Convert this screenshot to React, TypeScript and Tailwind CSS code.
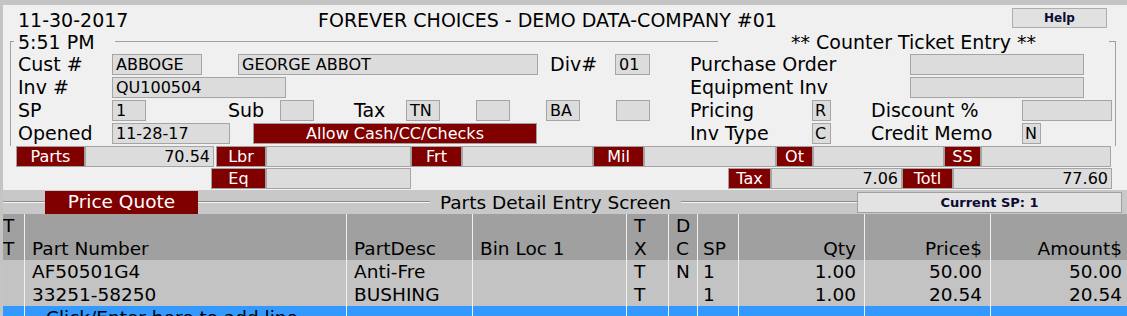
import type { ReactNode } from "react";

type P = { className?: string; children?: ReactNode };

function Label({ className = "", children }: P) {
  return <span className={`shrink-0 whitespace-nowrap text-[19px] leading-[23px] ${className}`}>{children}</span>;
}

function Field({ className = "", children }: P) {
  return (
    <div
      className={`flex h-[21px] shrink-0 items-center overflow-hidden whitespace-nowrap border border-[#a5a5a5] bg-[#dcdcdc] px-[3px] text-[16px] leading-none ${className}`}
    >
      {children}
    </div>
  );
}

function Red({ className = "", children }: P) {
  return (
    <div
      className={`flex h-[21px] shrink-0 items-center justify-center whitespace-nowrap border border-[#a0a0a0] bg-[#800000] text-[16px] leading-none text-white ${className}`}
    >
      {children}
    </div>
  );
}

function Etch({ className = "" }: { className?: string }) {
  return <div className={`h-[2px] border-t border-b border-t-[#8c8c8c] border-b-[#f4f4f4] ${className}`} />;
}

const cols = [
  "w-[21px]",
  "w-[322px] border-l border-[#f0f0f0] pl-[7px]",
  "w-[126px] border-l border-[#f0f0f0] pl-[7px]",
  "w-[154px] border-l border-[#f0f0f0] pl-[7px]",
  "w-[42px] border-l border-[#f0f0f0] pl-[7px]",
  "w-[29px] border-l border-[#f0f0f0] pl-[7px]",
  "w-[41px] border-l border-[#f0f0f0] pl-[5px]",
  "w-[126px] border-l border-[#f0f0f0] pr-[8px] text-right",
  "w-[126px] border-l border-[#f0f0f0] pr-[8px] text-right",
  "w-[140px] border-l border-[#f0f0f0] pr-[8px] text-right",
];

const head = [["T", "T"], ["Part Number"], ["PartDesc"], ["Bin Loc 1"], ["T", "X"], ["D", "C"], ["SP"], ["Qty"], ["Price$"], ["Amount$"]];

const lines = [
  ["", "AF50501G4", "Anti-Fre", "", "T", "N", "1", "1.00", "50.00", "50.00"],
  ["", "33251-58250", "BUSHING", "", "T", "", "1", "1.00", "20.54", "20.54"],
];

export default function App() {
  return (
    <div className="h-[316px] w-[1127px] overflow-hidden border-l-[3px] border-t-[5px] border-[#c4c4c4] bg-[#f0f0f0] font-['DejaVu_Sans',sans-serif] text-black">
      {/* title row */}
      <div className="flex h-[36px] items-start">
        <span className="mt-[4px] w-[315px] shrink-0 pl-[15px] text-[19px] leading-[22px]">11-30-2017</span>
        <span className="mt-[4px] whitespace-nowrap text-[19px] leading-[22px]">FOREVER CHOICES - DEMO DATA-COMPANY #01</span>
        <button className="ml-auto mr-[20px] mt-[3px] flex h-[20px] w-[95px] items-center justify-center border border-[#adadad] bg-[#e1e1e1] text-[12px] font-bold text-[#0a0a32]">
          Help
        </button>
      </div>

      {/* group box */}
      <div className="relative ml-[7px] w-[1106px] border-l border-r border-t border-[#a0a0a0] pb-[1px] pl-[7px] pt-[11px]">
        <span className="absolute left-[3px] top-[-11px] w-[101px] bg-[#f0f0f0] pl-[4px] text-[19px] leading-[22px]">5:51 PM</span>
        <span className="absolute left-[707px] top-[-11px] w-[391px] bg-[#f0f0f0] text-center text-[19px] leading-[22px]">
          ** Counter Ticket Entry **
        </span>

        <div className="flex h-[23px] items-center">
          <Label className="w-[94px]">Cust #</Label>
          <Field className="w-[90px]">ABBOGE</Field>
          <Field className="ml-[36px] w-[300px]">GEORGE ABBOT</Field>
          <Label className="ml-[12px] w-[65px]">Div#</Label>
          <Field className="w-[35px]">01</Field>
          <Label className="ml-[40px] w-[220px]">Purchase Order</Label>
          <Field className="w-[174px]" />
        </div>
        <div className="flex h-[23px] items-center">
          <Label className="w-[94px]">Inv #</Label>
          <Field className="w-[174px]">QU100504</Field>
          <Label className="ml-[404px] w-[220px]">Equipment Inv</Label>
          <Field className="w-[174px]" />
        </div>
        <div className="flex h-[23px] items-center">
          <Label className="w-[94px]">SP</Label>
          <Field className="w-[34px]">1</Field>
          <Label className="ml-[82px] w-[52px]">Sub</Label>
          <Field className="w-[34px]" />
          <Label className="ml-[40px] w-[52px]">Tax</Label>
          <Field className="w-[34px]">TN</Field>
          <Field className="ml-[36px] w-[34px]" />
          <Field className="ml-[36px] w-[34px]">BA</Field>
          <Field className="ml-[36px] w-[34px]" />
          <Label className="ml-[40px] w-[122px]">Pricing</Label>
          <Field className="w-[19px] !px-[2px]">R</Field>
          <Label className="ml-[40px] w-[151px]">Discount %</Label>
          <Field className="w-[90px]" />
        </div>
        <div className="flex h-[23px] items-center">
          <Label className="w-[94px]">Opened</Label>
          <Field className="w-[118px]">11-28-17</Field>
          <Red className="ml-[23px] w-[284px]">Allow Cash/CC/Checks</Red>
          <Label className="ml-[153px] w-[122px]">Inv Type</Label>
          <Field className="w-[19px] !px-[2px]">C</Field>
          <Label className="ml-[40px] w-[151px]">Credit Memo</Label>
          <Field className="w-[19px] !px-[2px]">N</Field>
        </div>
      </div>

      {/* totals */}
      <div className="ml-[13px] flex h-[21px] items-center">
        <Red className="w-[69px]">Parts</Red>
        <Field className="w-[129px] justify-end">70.54</Field>
        <Red className="ml-[2px] w-[50px]">Lbr</Red>
        <Field className="w-[145px]" />
        <Red className="w-[51px]">Frt</Red>
        <Field className="w-[131px]" />
        <Red className="w-[51px]">Mil</Red>
        <Field className="w-[132px]" />
        <Red className="w-[37px]">Ot</Red>
        <Field className="w-[131px]" />
        <Red className="w-[37px]">SS</Red>
        <Field className="w-[130px]" />
      </div>
      <div className="mt-[1px] flex h-[21px] items-center">
        <Red className="ml-[208px] w-[55px]">Eq</Red>
        <Field className="w-[145px]" />
        <Red className="ml-[317px] w-[43px]">Tax</Red>
        <Field className="w-[131px] justify-end">7.06</Field>
        <Red className="w-[51px]">Totl</Red>
        <Field className="w-[159px] justify-end">77.60</Field>
      </div>

      {/* section bar */}
      <div className="mt-[1px] flex h-[24px] items-center bg-[#c8c8c8]">
        <Etch className="w-[42px] shrink-0" />
        <div className="flex h-[23px] w-[153px] shrink-0 items-center justify-center self-end bg-[#800000] text-[18.5px] leading-none text-white">
          Price Quote
        </div>
        <Etch className="w-[232px] shrink-0" />
        <div className="h-[24px] w-[251px] shrink-0 pt-[2px] text-center text-[18.5px] leading-[22px]">Parts Detail Entry Screen</div>
        <Etch className="flex-1" />
        <div className="mb-[1px] flex h-[21px] w-[265px] shrink-0 items-center justify-center self-end border border-[#a0a0a0] bg-[#e3e3e3] text-[13px] font-bold text-[#0a0a32]">
          Current SP: 1
        </div>
        <div className="w-[5px] shrink-0" />
      </div>

      {/* grid */}
      <div className="text-[18.5px] leading-[23px]">
        <div className="flex h-[46px] bg-[#a0a0a0]">
          {head.map((h, i) => (
            <div key={i} className={`flex shrink-0 flex-col justify-end whitespace-nowrap ${cols[i]}`}>
              {h.map((t, j) => (
                <span key={j}>{t}</span>
              ))}
            </div>
          ))}
        </div>
        {lines.map((r, k) => (
          <div key={k} className="flex h-[23px] bg-[#c3c3c3]">
            {r.map((c, i) => (
              <div key={i} className={`shrink-0 whitespace-nowrap ${cols[i]}`}>
                {c}
              </div>
            ))}
          </div>
        ))}
        <div className="flex h-[23px] bg-[#3399ff]">
          {cols.map((c, i) => (
            <div key={i} className={`shrink-0 whitespace-nowrap ${c}`}>
              {i === 1 && <span className="ml-[14px]">Click/Enter here to add line</span>}
            </div>
          ))}
        </div>
      </div>
    </div>
  );
}
